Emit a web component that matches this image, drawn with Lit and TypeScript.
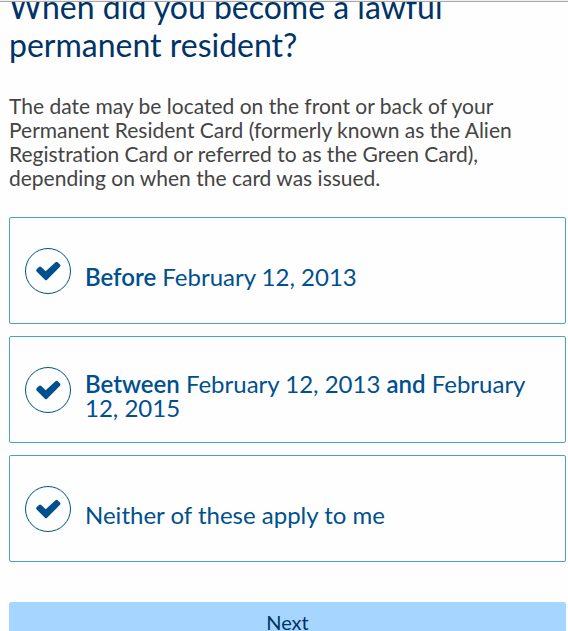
import { LitElement, html, css } from "lit";
import { customElement, state } from "lit/decorators.js";

type Part = { text: string; strong?: boolean };

const OPTIONS: Part[][] = [
  [{ text: "Before", strong: true }, { text: " February 12, 2013" }],
  [
    { text: "Between", strong: true },
    { text: " February 12, 2013 " },
    { text: "and", strong: true },
    { text: " February 12, 2015" },
  ],
  [{ text: "Neither of these apply to me" }],
];

@customElement("app-root")
export class AppRoot extends LitElement {
  @state() private selected = -1;

  static styles = css`
    :host {
      display: flex;
      flex-direction: column;
      height: 100vh;
      overflow: hidden;
      box-sizing: border-box;
      border-top: 1px solid #f0f0f0;
      background: #fefefe;
      color: #444;
      font-family: Lato, "Open Sans", sans-serif;
      font-variant-ligatures: none;
    }
    .viewport {
      flex: 1;
      min-height: 0;
      overflow: hidden;
      border-top: 1px solid #a8a8a8;
    }
    .page {
      margin-top: -14px;
      padding: 0 2px 0 9px;
    }
    .title {
      margin: 0;
      color: #003366;
      font-size: 32px;
      line-height: 38px;
      font-weight: 400;
    }
    .intro {
      margin: 30px 48px 0 0;
      font-size: 21px;
      line-height: 24px;
    }
    .options {
      display: flex;
      flex-direction: column;
      gap: 12px;
      margin: 27px 0 0;
    }
    .option {
      display: flex;
      align-items: center;
      gap: 14px;
      min-height: 107px;
      box-sizing: border-box;
      padding: 0 32px 0 15px;
      border: 1px solid #4f9fc4;
      border-radius: 2px;
      color: #00508f;
      cursor: pointer;
    }
    .mark {
      flex: none;
      display: grid;
      width: 46px;
      height: 46px;
    }
    .radio,
    .check {
      grid-area: 1 / 1;
      width: 46px;
      height: 46px;
      margin: 0;
      box-sizing: border-box;
    }
    .radio {
      appearance: none;
      border: 1px solid #00508f;
      border-radius: 50%;
      cursor: pointer;
    }
    .check {
      fill: #00508f;
      pointer-events: none;
    }
    .text {
      padding-top: 12px;
      font-size: 24px;
      line-height: 24px;
    }
    .strong {
      font-weight: 600;
    }
    .next {
      display: block;
      width: 100%;
      height: 40px;
      margin: 40px 0 0;
      padding: 0;
      border: 0;
      border-radius: 2px;
      background: #a6d6ff;
      color: #003366;
      font: inherit;
      font-size: 20px;
      line-height: 40px;
      cursor: pointer;
    }
  `;

  private renderPart(part: Part) {
    return part.strong ? html`<strong class="strong">${part.text}</strong>` : part.text;
  }

  render() {
    return html`<div class="viewport">
      <main class="page">
        <h1 class="title">When did you become a lawful permanent resident?</h1>
        <p class="intro">
          The date may be located on the front or back of your Permanent Resident Card (formerly
          known as the Alien Registration Card or referred to as the Green Card), depending on when
          the card was issued.
        </p>
        <div class="options" role="radiogroup" aria-label="Date of permanent residence">
          ${OPTIONS.map(
            (parts, i) => html`<label class="option">
              <span class="mark">
                <input
                  class="radio"
                  type="radio"
                  name="date"
                  .checked=${this.selected === i}
                  @change=${() => (this.selected = i)}
                />
                <svg class="check" viewBox="0 0 46 46" aria-hidden="true">
                  <path
                    d="M11.600 21.200L14 18.900Q15.100 18 16.200 18.900L20.700 23.300L30.500 14.300Q31.600 13.400 32.700 14.300L35 16.600Q35.900 17.700 35 18.800L22.100 31.800Q21 32.800 19.900 31.800L11.600 23.400Q10.700 22.300 11.600 21.200z"
                  />
                </svg>
              </span>
              <span class="text">${parts.map((p) => this.renderPart(p))}</span>
            </label>`
          )}
        </div>
        <button class="next" type="button">Next</button>
      </main>
    </div>`;
  }
}
